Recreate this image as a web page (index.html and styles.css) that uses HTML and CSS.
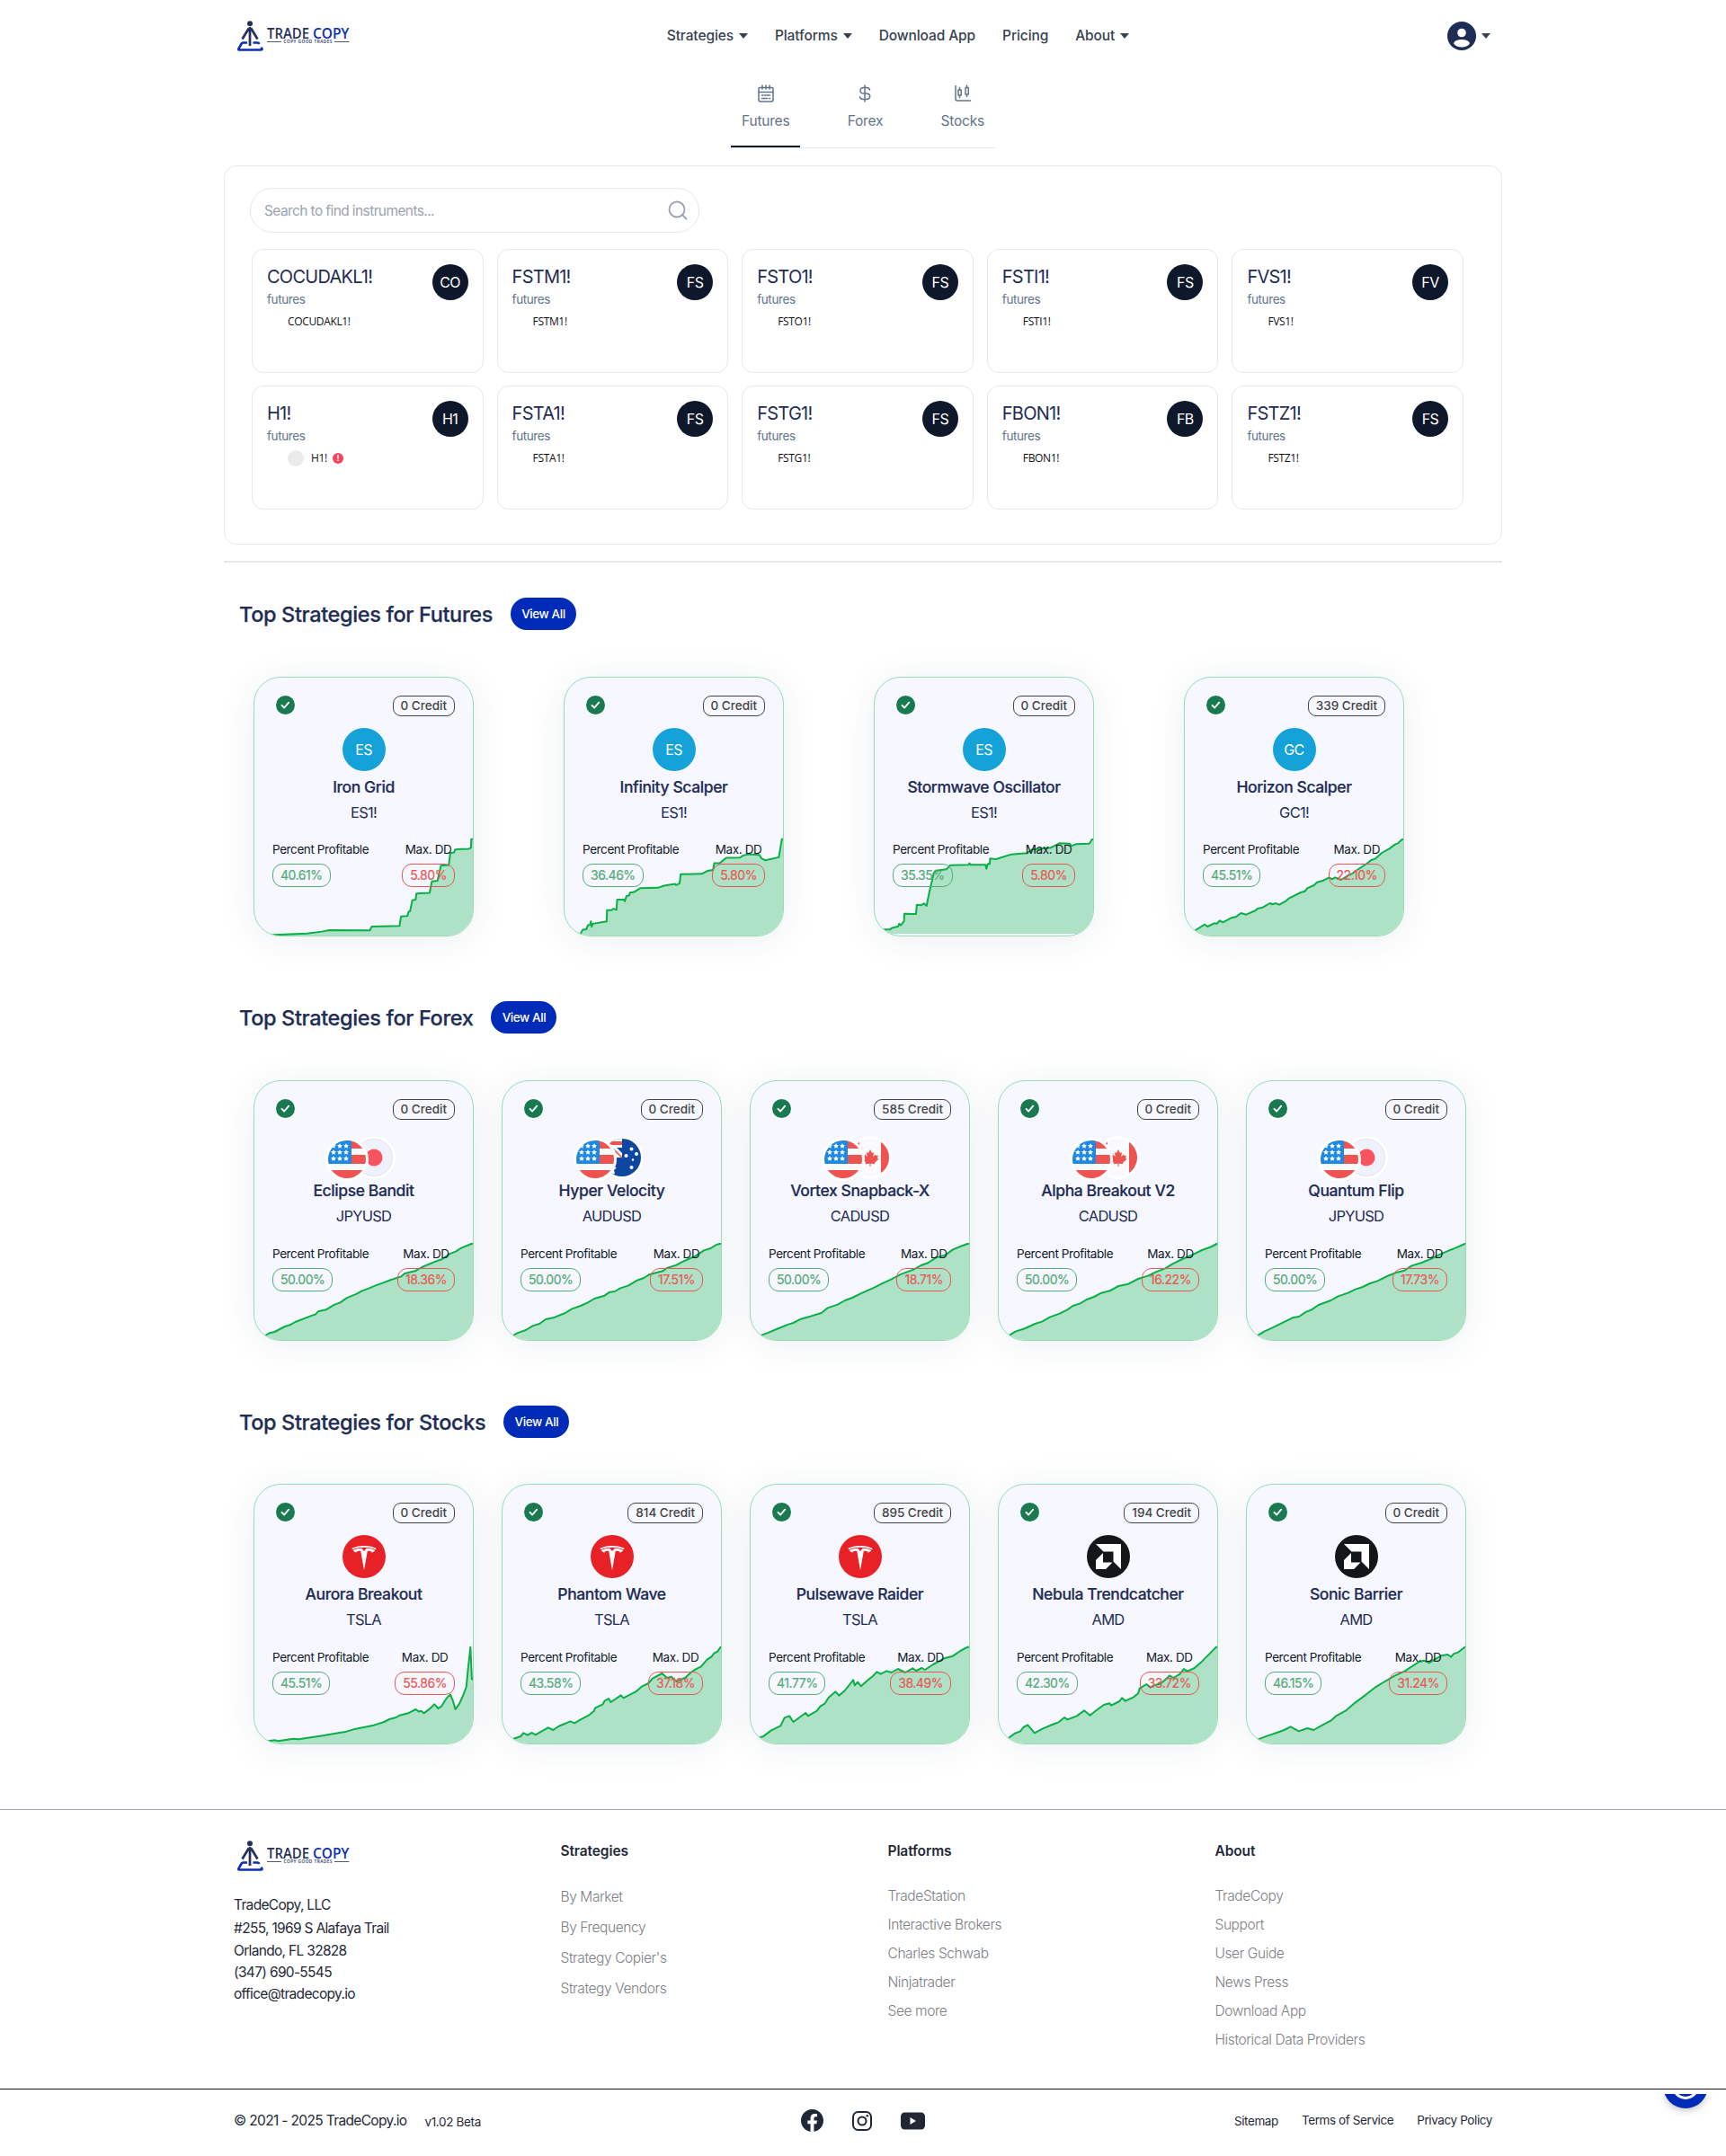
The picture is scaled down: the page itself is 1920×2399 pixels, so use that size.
FILE: index.html
```html
<!DOCTYPE html>
<html lang="en">
<head>
<meta charset="utf-8">
<title>TradeCopy</title>
<link rel="stylesheet" href="styles.css">
</head>
<body>
<svg class="defs" width="0" height="0">
  <symbol id="check" viewBox="0 0 21 21"><circle cx="10.500" cy="10.500" r="10.500" fill="#1a7a4f"/><path d="m6.500 10.800 2.700 2.700 5-5.800" fill="none" stroke="#fff" stroke-width="1.900" stroke-linecap="round" stroke-linejoin="round"/></symbol>
  <symbol id="tsla" viewBox="0 0 48 48"><circle cx="24" cy="24" r="24" fill="#e82127"/><path transform="translate(10.500 12) scale(1.125 1.140)" fill="#fff" d="M12 5.362l2.475-3.026s4.245.09 8.471 2.054c-1.082 1.636-3.231 2.438-3.231 2.438-.146-1.439-1.154-1.79-4.354-1.79L12 24 8.619 5.034c-3.18 0-4.188.354-4.335 1.792 0 0-2.146-.795-3.229-2.43C5.28 2.431 9.525 2.34 9.525 2.34L12 5.362zm0-3.899c3.415-.03 7.326.528 11.328 2.28.535-.968.672-1.395.672-1.395C19.625.612 15.528.015 12 0 8.472.015 4.375.61 0 2.349c0 0 .195.525.672 1.396C4.674 1.989 8.585 1.435 12 1.46z"/></symbol>
  <symbol id="amd" viewBox="0 0 48 48"><circle cx="24" cy="24" r="24" fill="#14171a"/><path fill="#fff" d="M10 10h28v28l-8.500-8.500V18.500h-11zM18 20v10.500h10.500L21 38H10V28z"/></symbol>
  <clipPath id="disc"><circle cx="24" cy="24" r="21"/></clipPath>
  <symbol id="star" viewBox="0 0 10 10"><path fill="#fff" d="m5 0 1.500 3.300 3.500.4-2.600 2.400.7 3.600L5 8 1.900 9.700l.7-3.600L0 3.700l3.500-.4z"/></symbol>
  <symbol id="usd" viewBox="0 0 48 48">
    <circle cx="24" cy="24" r="24" fill="#fff"/>
    <g clip-path="url(#disc)">
      <path fill="#f9fafc" d="M0 0h48v48H0z"/><path fill="#ef5350" d="M24 3h24v9H24zM24 19h24v10H24zM0 36h48v12H0z"/><path fill="#1e88e5" d="M0 0h29v29H0z"/>
      <use href="#star" x="6" y="6" width="6" height="6"/><use href="#star" x="13" y="6" width="6" height="6"/><use href="#star" x="20" y="6" width="6" height="6"/>
      <use href="#star" x="6" y="13" width="6" height="6"/><use href="#star" x="13" y="13" width="6" height="6"/><use href="#star" x="20" y="13" width="6" height="6"/>
      <use href="#star" x="6" y="20" width="6" height="6"/><use href="#star" x="13" y="20" width="6" height="6"/><use href="#star" x="20" y="20" width="6" height="6"/>
    </g>
  </symbol>
  <symbol id="jpy" viewBox="0 0 48 48"><circle cx="24" cy="24" r="24" fill="#fff"/><circle cx="24" cy="24" r="20.500" fill="#eff2fa" stroke="#e1e3ec"/><circle cx="24" cy="24" r="9.500" fill="#f9535f"/></symbol>
  <symbol id="cad" viewBox="0 0 48 48"><circle cx="24" cy="24" r="24" fill="#fff"/><g clip-path="url(#disc)"><path fill="#fafafc" d="M0 0h48v48H0z"/><path fill="#ef5350" d="M0 0h12v48H0zM36 0h12v48H36zM24 15l2 4 2-1-.7 5 2.700-2.500.8 1.500 2.200-.3-1 3 1.500 1-4.500 4 .3 1.500-4.800-.5v3.300h-1v-3.300l-4.800.5.3-1.500-4.500-4 1.500-1-1-3 2.200.3.800-1.500 2.700 2.500-.7-5 2 1z"/></g></symbol>
  <symbol id="aud" viewBox="0 0 48 48"><circle cx="24" cy="24" r="24" fill="#fff"/><g clip-path="url(#disc)"><path fill="#0d47a1" d="M0 0h48v48H0z"/><path fill="#fff" d="M0 0h24v24H0z"/><path fill="#ef5350" d="M0 6h24v4H0zM11 13l3 0 10 10v2z"/><path fill="#0d47a1" d="M18 13h6v6z"/><path fill="#fff" d="m12 31 2 4 4 0-3 3 1 4-8 0z"/><g fill="#fff"><circle cx="34.500" cy="14.500" r="2"/><circle cx="28.500" cy="22" r="2"/><circle cx="40" cy="20" r="2"/><circle cx="34.500" cy="35" r="2"/><circle cx="36" cy="26.500" r="1.200"/></g></g></symbol>
</svg>

<header class="header">
  <svg class="logo" viewBox="0 0 125 34">
    <circle cx="14" cy="3.200" r="3"/>
    <path class="logo-legs" d="M14 7v21M12.800 8.500 5.500 20.500M15.200 8.500 22.500 20.500"/>
    <path class="logo-base" d="M11 24.500H6.500Q5.300 24.500 4.700 25.500L1.500 31Q.8 32.500 2.600 32.500H26Q28 32.500 27.300 31L26.500 29.600M17.500 24.500H22.500Q23.800 24.500 24.400 26"/>
    <text x="33" y="20" textLength="47" lengthAdjust="spacingAndGlyphs">TRADE</text>
    <text class="logo-blue" x="84" y="20" textLength="40.500" lengthAdjust="spacingAndGlyphs">COPY</text>
    <path class="logo-rule" d="M33 23.500h16M108 23.500h16.500"/>
    <text class="logo-tag" x="51.500" y="25.300" textLength="54">COPY GOOD TRADES</text>
  </svg>
  <nav class="nav">
    <a class="drop">Strategies</a><a class="drop">Platforms</a><a>Download App</a><a>Pricing</a><a class="drop">About</a>
  </nav>
  <div class="user drop">
    <svg width="32" height="32" viewBox="0 0 32 32"><circle cx="16" cy="16" r="16" fill="#1f2d55"/><circle cx="16" cy="12.500" r="4.800" fill="#fff"/><path fill="#fff" d="M7 24.500c1-3.500 5-4.500 9-4.500s8 1 9 4.500c-2 2.500-5 4-9 4s-7-1.500-9-4z"/></svg>
  </div>
</header>

<div class="tabs">
  <div class="tab tab-active">
    <svg viewBox="0 0 20 20"><path d="M3.500 3.500h13q1.500 0 1.500 1.500v12q0 2-2 2H4q-2 0-2-2V5q0-1.500 1.500-1.500zM2 8.500h16M6 1v4M10 1v4M14 1v4M5.500 12h1.500M8.500 12h6M5.500 15.500h6M13.500 15.500h1"/></svg>
    <span>Futures</span>
  </div>
  <div class="tab">
    <svg viewBox="0 0 20 20"><path d="M10 1v18M15.500 6Q15 3.500 11.500 3.500H9Q5 3.500 5 6.700 5 10 9 10h2.500Q15.700 10 15.700 13.300 15.700 16.500 11.500 16.500H8.500Q5 16.500 4.500 13.800"/></svg>
    <span>Forex</span>
  </div>
  <div class="tab">
    <svg viewBox="0 0 20 20"><path d="M2 1.500V16q0 2 2 2H18.500M6.500 3.500v2.500M6.500 12v2.500M5 6h3.200v6H5zM14.500 1v2.500M14.500 11v2.500M13 3.500h3.200v7.500H13z"/></svg>
    <span>Stocks</span>
  </div>
</div>

<main class="main">
  <section class="panel">
    <div class="search"><span>Search to find instruments...</span>
      <svg width="22" height="22" viewBox="0 0 22 22"><path d="M10 1.500a8.500 8.500 0 1 0 0 17 8.500 8.500 0 0 0 0-17zM16.500 16.500l4 4" fill="none" stroke="#9ca3af" stroke-width="1.800" stroke-linecap="round"/></svg>
    </div>
    <div class="grid">
      <div class="inst"><div><h3>COCUDAKL1!</h3><p>futures</p><small>COCUDAKL1!</small></div><b>CO</b></div>
      <div class="inst"><div><h3>FSTM1!</h3><p>futures</p><small>FSTM1!</small></div><b>FS</b></div>
      <div class="inst"><div><h3>FSTO1!</h3><p>futures</p><small>FSTO1!</small></div><b>FS</b></div>
      <div class="inst"><div><h3>FSTI1!</h3><p>futures</p><small>FSTI1!</small></div><b>FS</b></div>
      <div class="inst"><div><h3>FVS1!</h3><p>futures</p><small>FVS1!</small></div><b>FV</b></div>
      <div class="inst"><div><h3>H1!</h3><p>futures</p><small><i class="dot"></i>H1!<i class="alert">!</i></small></div><b>H1</b></div>
      <div class="inst"><div><h3>FSTA1!</h3><p>futures</p><small>FSTA1!</small></div><b>FS</b></div>
      <div class="inst"><div><h3>FSTG1!</h3><p>futures</p><small>FSTG1!</small></div><b>FS</b></div>
      <div class="inst"><div><h3>FBON1!</h3><p>futures</p><small>FBON1!</small></div><b>FB</b></div>
      <div class="inst"><div><h3>FSTZ1!</h3><p>futures</p><small>FSTZ1!</small></div><b>FS</b></div>
    </div>
  </section>
  <hr class="rule">

  <section class="group">
    <div class="group-head"><h2>Top Strategies for Futures</h2><a class="btn">View All</a></div>
    <div class="cards cards-wide">
      <article class="card">
        <svg class="chart" viewBox="101 872 581 330" preserveAspectRatio="none"><path d="M60 1260V1200H140L150 1197 240 1192 280 1186 300 1181 408 1182 413 1169 487 1167 491 1136 508 1134 511 1120 515 1119 521 1082 530 1080 532 1060 567 1058 573 1020 588 1018 597 968 618 966 622 926 632 924 635 914 672 912 677 908 678 880H740V1260z"/></svg>
        <div class="top"><svg><use href="#check"/></svg><span class="credit">0 Credit</span></div>
        <div class="badge badge-text">ES</div><h4>Iron Grid</h4><p class="sym">ES1!</p>
        <div class="stats"><div><span>Percent Profitable</span><em class="up">40.61%</em></div><div><span>Max. DD</span><em class="down">5.80%</em></div></div>
      </article>
      <article class="card">
        <svg class="chart" viewBox="920 872 581 330" preserveAspectRatio="none"><path d="M900 1260V1240L962 1195 968 1180 978 1178 982 1165 988 1163 990 1152 992 1170 995 1160 1032 1152 1033 1115 1045 1115 1050 1110 1058 1114 1060 1080 1078 1080 1080 1086 1085 1068 1092 1066 1094 1057 1105 1055 1122 1042 1168 1041 1185 1034 1214 1028 1217 1032 1226 1026 1229 996 1285 995 1300 985 1315 982 1318 960 1332 960 1350 942 1387 941 1395 934 1410 930 1438 932 1444 944 1454 950 1490 940 1498 880H1560V1260z"/></svg>
        <div class="top"><svg><use href="#check"/></svg><span class="credit">0 Credit</span></div>
        <div class="badge badge-text">ES</div><h4>Infinity Scalper</h4><p class="sym">ES1!</p>
        <div class="stats"><div><span>Percent Profitable</span><em class="up">36.46%</em></div><div><span>Max. DD</span><em class="down">5.80%</em></div></div>
      </article>
      <article class="card">
        <svg class="chart chart-raised" viewBox="77 600 581 327" preserveAspectRatio="none"><path d="M50 980V913H118L122 908 140 902 142 894 147 898 155 885 156 860 187 861 189 830 200 832 208 826 215 834 222 790 234 725 240 716 268 712 278 698 326 697 329 692 332 697 372 697 374 710 378 694 383 694 384 676 400 678 440 662 482 658 495 646 545 640 568 625 596 626 600 634 612 628 648 626 655 612H720V980z"/></svg>
        <div class="top"><svg><use href="#check"/></svg><span class="credit">0 Credit</span></div>
        <div class="badge badge-text">ES</div><h4>Stormwave Oscillator</h4><p class="sym">ES1!</p>
        <div class="stats"><div><span>Percent Profitable</span><em class="up">35.35%</em></div><div><span>Max. DD</span><em class="down">5.80%</em></div></div>
      </article>
      <article class="card">
        <svg class="chart" viewBox="897 602 580 333" preserveAspectRatio="none"><path d="M880 980V950L925 914 950 895 957 902 975 891 982 892 990 882 998 888 1020 873 1032 870 1046 857 1060 862 1085 848 1090 842 1104 838 1123 824 1130 828 1137 824 1148 829 1165 817 1173 808 1205 788 1216 784 1222 774 1240 764 1248 754 1265 748 1280 738 1288 744 1296 738 1312 746 1330 732 1340 726 1345 722 1358 710 1380 692 1392 680 1402 676 1420 656 1440 642 1455 628 1463 624 1474 611H1540V980z"/></svg>
        <div class="top"><svg><use href="#check"/></svg><span class="credit">339 Credit</span></div>
        <div class="badge badge-text">GC</div><h4>Horizon Scalper</h4><p class="sym">GC1!</p>
        <div class="stats"><div><span>Percent Profitable</span><em class="up">45.51%</em></div><div><span>Max. DD</span><em class="down">22.10%</em></div></div>
      </article>
    </div>
  </section>

  <section class="group">
    <div class="group-head"><h2>Top Strategies for Forex</h2><a class="btn">View All</a></div>
    <div class="cards">
      <article class="card">
        <svg class="chart" viewBox="111 872 638 333" preserveAspectRatio="none"><path d="M80 1250V1210L143 1187 155 1179 170 1175 200 1157 215 1152 230 1142 275 1122 290 1116 297 1107 320 1101 345 1084 362 1077 380 1062 410 1048 425 1038 445 1030 465 1020 485 1012 510 1001 540 990 550 980 580 972 600 959 640 940 660 932 680 915 700 906 715 895 745 881H800V1250z"/></svg>
        <div class="top"><svg><use href="#check"/></svg><span class="credit">0 Credit</span></div>
        <div class="badge pair"><svg><use href="#usd"/></svg><svg><use href="#jpy"/></svg></div><h4>Eclipse Bandit</h4><p class="sym">JPYUSD</p>
        <div class="stats"><div><span>Percent Profitable</span><em class="up">50.00%</em></div><div><span>Max. DD</span><em class="down">18.36%</em></div></div>
      </article>
      <article class="card">
        <svg class="chart" viewBox="832 872 638 333" preserveAspectRatio="none"><path d="M800 1250V1210L863 1187 875 1179 900 1169 920 1155 940 1148 958 1133 980 1128 1015 1112 1035 1098 1060 1088 1080 1078 1100 1064 1130 1054 1145 1042 1160 1040 1175 1030 1200 1020 1225 1003 1245 995 1260 984 1300 972 1312 962 1340 952 1355 942 1375 932 1395 922 1420 903 1440 896 1455 885 1466 881H1520V1250z"/></svg>
        <div class="top"><svg><use href="#check"/></svg><span class="credit">0 Credit</span></div>
        <div class="badge pair"><svg><use href="#usd"/></svg><svg><use href="#aud"/></svg></div><h4>Hyper Velocity</h4><p class="sym">AUDUSD</p>
        <div class="stats"><div><span>Percent Profitable</span><em class="up">50.00%</em></div><div><span>Max. DD</span><em class="down">17.51%</em></div></div>
      </article>
      <article class="card">
        <svg class="chart" viewBox="63 602 445 333" preserveAspectRatio="none"><path d="M40 980V940L85 916 100 907 120 893 140 880 150 875 165 862 185 853 207 842 220 825 240 814 255 800 270 791 290 775 315 757 330 744 350 729 370 712 395 697 410 683 425 674 440 658 460 648 475 630 490 620 505 611H560V980z"/></svg>
        <div class="top"><svg><use href="#check"/></svg><span class="credit">585 Credit</span></div>
        <div class="badge pair"><svg><use href="#usd"/></svg><svg><use href="#cad"/></svg></div><h4>Vortex Snapback-X</h4><p class="sym">CADUSD</p>
        <div class="stats"><div><span>Percent Profitable</span><em class="up">50.00%</em></div><div><span>Max. DD</span><em class="down">18.71%</em></div></div>
      </article>
      <article class="card">
        <svg class="chart" viewBox="566 602 445 333" preserveAspectRatio="none"><path d="M540 980V940L588 916 600 904 620 893 640 878 655 870 670 856 690 844 705 832 717 818 732 810 745 797 760 788 775 775 792 768 810 752 830 745 850 728 870 718 885 706 905 693 920 678 940 662 960 648 980 632 1000 620 1010 611H1060V980z"/></svg>
        <div class="top"><svg><use href="#check"/></svg><span class="credit">0 Credit</span></div>
        <div class="badge pair"><svg><use href="#usd"/></svg><svg><use href="#cad"/></svg></div><h4>Alpha Breakout V2</h4><p class="sym">CADUSD</p>
        <div class="stats"><div><span>Percent Profitable</span><em class="up">50.00%</em></div><div><span>Max. DD</span><em class="down">16.22%</em></div></div>
      </article>
      <article class="card">
        <svg class="chart" viewBox="1069 602 445 333" preserveAspectRatio="none"><path d="M1040 980V940L1092 916 1105 903 1120 892 1135 880 1150 868 1162 858 1175 854 1190 838 1200 832 1215 815 1240 800 1255 786 1275 775 1290 763 1305 755 1320 743 1335 735 1355 719 1375 706 1390 700 1405 684 1425 674 1445 661 1460 648 1480 634 1495 624 1513 611H1560V980z"/></svg>
        <div class="top"><svg><use href="#check"/></svg><span class="credit">0 Credit</span></div>
        <div class="badge pair"><svg><use href="#usd"/></svg><svg><use href="#jpy"/></svg></div><h4>Quantum Flip</h4><p class="sym">JPYUSD</p>
        <div class="stats"><div><span>Percent Profitable</span><em class="up">50.00%</em></div><div><span>Max. DD</span><em class="down">17.73%</em></div></div>
      </article>
    </div>
  </section>

  <section class="group">
    <div class="group-head"><h2>Top Strategies for Stocks</h2><a class="btn">View All</a></div>
    <div class="cards">
      <article class="card">
        <svg class="chart" viewBox="111 869 638 333" preserveAspectRatio="none"><path d="M80 1250V1192L150 1191 172 1188 180 1191 225 1183 240 1185 310 1173 380 1159 400 1152 460 1138 490 1127 505 1118 525 1112 535 1105 560 1098 582 1085 592 1093 598 1090 606 1098 622 1084 637 1068 648 1082 658 1074 672 1048 683 1035 691 1057 698 1085 710 1065 720 1040 730 1010 735 950 742 877 746 984 760 990V1250z"/></svg>
        <div class="top"><svg><use href="#check"/></svg><span class="credit">0 Credit</span></div>
        <svg class="badge"><use href="#tsla"/></svg><h4>Aurora Breakout</h4><p class="sym">TSLA</p>
        <div class="stats"><div><span>Percent Profitable</span><em class="up">45.51%</em></div><div><span>Max. DD</span><em class="down">55.86%</em></div></div>
      </article>
      <article class="card">
        <svg class="chart" viewBox="832 869 638 333" preserveAspectRatio="none"><path d="M800 1250V1205L863 1184 885 1175 893 1164 905 1171 918 1163 928 1170 950 1156 965 1146 980 1154 995 1142 1030 1125 1042 1131 1060 1119 1085 1104 1098 1092 1103 1080 1125 1068 1130 1057 1142 1049 1148 1061 1178 1038 1185 1047 1220 1027 1240 1008 1258 998 1270 982 1298 965 1312 980 1325 976 1340 992 1365 980 1382 962 1395 952 1412 942 1430 918 1442 910 1450 898 1460 892 1468 878H1520V1250z"/></svg>
        <div class="top"><svg><use href="#check"/></svg><span class="credit">814 Credit</span></div>
        <svg class="badge"><use href="#tsla"/></svg><h4>Phantom Wave</h4><p class="sym">TSLA</p>
        <div class="stats"><div><span>Percent Profitable</span><em class="up">43.58%</em></div><div><span>Max. DD</span><em class="down">37.18%</em></div></div>
      </article>
      <article class="card">
        <svg class="chart" viewBox="63 599 445 333" preserveAspectRatio="none"><path d="M40 980V940L81 909 88 906 105 885 124 870 132 843 142 837 150 857 175 827 180 837 198 820 205 805 214 796 222 775 236 756 243 769 255 752 272 717 275 735 281 724 288 738 300 720 312 704 320 690 328 697 340 687 350 692 363 680 378 692 393 678 400 686 412 677 418 683 435 665 450 652 457 645 475 637 490 620 505 607H560V980z"/></svg>
        <div class="top"><svg><use href="#check"/></svg><span class="credit">895 Credit</span></div>
        <svg class="badge"><use href="#tsla"/></svg><h4>Pulsewave Raider</h4><p class="sym">TSLA</p>
        <div class="stats"><div><span>Percent Profitable</span><em class="up">41.77%</em></div><div><span>Max. DD</span><em class="down">38.49%</em></div></div>
      </article>
      <article class="card">
        <svg class="chart" viewBox="566 599 445 333" preserveAspectRatio="none"><path d="M540 980V940L586 911 598 896 610 888 616 875 625 867 639 894 655 880 675 866 688 858 700 842 706 849 725 837 740 819 752 835 765 818 780 800 792 795 795 802 812 788 817 777 824 787 840 775 850 762 853 745 867 731 875 742 885 733 895 730 908 712 914 702 922 710 935 697 943 680 950 688 965 677 980 655 995 630 1009 607H1060V980z"/></svg>
        <div class="top"><svg><use href="#check"/></svg><span class="credit">194 Credit</span></div>
        <svg class="badge"><use href="#amd"/></svg><h4>Nebula Trendcatcher</h4><p class="sym">AMD</p>
        <div class="stats"><div><span>Percent Profitable</span><em class="up">42.30%</em></div><div><span>Max. DD</span><em class="down">33.72%</em></div></div>
      </article>
      <article class="card">
        <svg class="chart" viewBox="1069 599 445 333" preserveAspectRatio="none"><path d="M1040 980V940L1092 915 1110 904 1130 893 1145 884 1158 873 1175 888 1192 878 1205 884 1220 870 1240 853 1250 838 1270 820 1290 792 1310 768 1330 742 1350 722 1370 703 1390 688 1420 656 1430 652 1440 660 1452 648 1465 636 1478 632 1485 640 1490 630 1500 624 1513 607H1560V980z"/></svg>
        <div class="top"><svg><use href="#check"/></svg><span class="credit">0 Credit</span></div>
        <svg class="badge"><use href="#amd"/></svg><h4>Sonic Barrier</h4><p class="sym">AMD</p>
        <div class="stats"><div><span>Percent Profitable</span><em class="up">46.15%</em></div><div><span>Max. DD</span><em class="down">31.24%</em></div></div>
      </article>
    </div>
  </section>
</main>

<footer class="footer">
  <div class="foot-grid">
    <div class="address">
      <svg class="logo" viewBox="0 0 125 34">
        <circle cx="14" cy="3.200" r="3"/>
        <path class="logo-legs" d="M14 7v21M12.800 8.500 5.500 20.500M15.200 8.500 22.500 20.500"/>
        <path class="logo-base" d="M11 24.500H6.500Q5.300 24.500 4.700 25.500L1.500 31Q.8 32.500 2.600 32.500H26Q28 32.500 27.300 31L26.500 29.600M17.500 24.500H22.500Q23.800 24.500 24.400 26"/>
        <text x="33" y="20" textLength="47" lengthAdjust="spacingAndGlyphs">TRADE</text>
        <text class="logo-blue" x="84" y="20" textLength="40.500" lengthAdjust="spacingAndGlyphs">COPY</text>
        <path class="logo-rule" d="M33 23.500h16M108 23.500h16.500"/>
        <text class="logo-tag" x="51.500" y="25.300" textLength="54">COPY GOOD TRADES</text>
      </svg>
      <p class="company">TradeCopy, LLC</p><p class="company">#255, 1969 S Alafaya Trail</p><p>Orlando, FL 32828</p><p>(347) 690-5545</p><p>office@tradecopy.io</p></div>
    <div class="col col-loose"><h5>Strategies</h5><a>By Market</a><a>By Frequency</a><a>Strategy Copier's</a><a>Strategy Vendors</a></div>
    <div class="col"><h5>Platforms</h5><a>TradeStation</a><a>Interactive Brokers</a><a>Charles Schwab</a><a>Ninjatrader</a><a>See more</a></div>
    <div class="col"><h5>About</h5><a>TradeCopy</a><a>Support</a><a>User Guide</a><a>News Press</a><a>Download App</a><a>Historical Data Providers</a></div>
  </div>
  <div class="bottom">
    <div class="bottom-in">
      <div class="copy"><span>© 2021 - 2025 TradeCopy.io</span><small>v1.02 Beta</small></div>
      <div class="social">
        <svg width="25" height="25" viewBox="0 0 24 24"><path d="M24 12.073c0-6.627-5.373-12-12-12s-12 5.373-12 12c0 5.990 4.388 10.954 10.125 11.854v-8.385H7.078v-3.470h3.047V9.430c0-3.007 1.792-4.669 4.533-4.669 1.312 0 2.686.235 2.686.235v2.953H15.830c-1.491 0-1.956.925-1.956 1.874v2.250h3.328l-.532 3.470h-2.796v8.385C19.612 23.027 24 18.062 24 12.073z"/></svg>
        <svg width="22" height="22" viewBox="0 0 22 22"><g fill="none" stroke="#202838" stroke-width="2"><rect x="1" y="1" width="20" height="20" rx="5.500"/><circle cx="11" cy="11" r="4.500"/></g><circle cx="16.800" cy="5.200" r="1.300"/></svg>
        <svg width="27" height="20" viewBox="0 0 27 20"><rect width="27" height="19" y=".5" rx="4.500"/><path d="M10.500 6v8l6.500-4z" fill="#fff"/></svg>
      </div>
      <div class="legal"><a class="low">Sitemap</a><a>Terms of Service</a><a>Privacy Policy</a></div>
    </div>
  </div>
</footer>
<div class="chat"><svg width="70" height="40" viewBox="0 0 70 40"><circle cx="35" cy="-9" r="25" fill="#002bb8"/><circle cx="35" cy="-9" r="13.500" fill="none" stroke="#fff" stroke-width="3"/></svg></div>
</body>
</html>
```
FILE: styles.css
```css
* { box-sizing: border-box; margin: 0; padding: 0; }
body { position: relative; width: 1920px; height: 2399px; overflow: hidden; background: #fff; font-family: Inter, "Liberation Sans", sans-serif; color: #1f2937; }
.defs { position: absolute; }

.logo { display: block; width: 125px; height: 34px; fill: #26305a; font: 600 16px "Open Sans", sans-serif; }
.logo-legs { fill: none; stroke: #26305a; stroke-width: 2.7; }
.logo-base { fill: none; stroke: #0a2fb8; stroke-width: 2.6; }
.logo-blue { fill: #0a2fb8; }
.logo-rule { stroke: #26305a; stroke-width: .8; }
.logo-tag { font-size: 4.8px; }

.header { width: 1395px; height: 80px; margin: 0 auto; padding-left: 1px; display: flex; align-items: center; justify-content: space-between; }
.nav { display: flex; gap: 30px; padding-bottom: 1px; font-size: 15.5px; font-weight: 500; letter-spacing: -.1px; color: #374151; }
.drop { display: flex; align-items: center; }
.drop::after { content: ""; margin-left: 6px; border: 5px solid transparent; border-top: 6px solid #374151; border-bottom: 0; }

.tabs { width: 294px; margin: 0 auto; height: 85px; display: flex; justify-content: space-between; border-bottom: 1px solid #e2e8f0; }
.tab { height: 84px; padding: 14px 12px 0; display: flex; flex-direction: column; align-items: center; gap: 9px; font-size: 15.5px; line-height: 24px; letter-spacing: -.2px; color: #64748b; }
.tab-active { border-bottom: 2px solid #0f172a; }
.tab svg { width: 20px; height: 20px; fill: none; stroke: #64748b; stroke-width: 1.5; stroke-linecap: round; stroke-linejoin: round; }

.main { width: 1422px; margin: 19px auto 0; }
.panel { height: 422px; border: 1px solid #e5e7eb; border-radius: 14px; padding: 24px 28px 0; }
.search { width: 500px; height: 50px; border: 1px solid #e5e7eb; border-radius: 25px; padding: 0 12px 0 15px; display: flex; align-items: center; justify-content: space-between; font-size: 15.5px; letter-spacing: -.6px; color: #9ca3af; }
.grid { width: 1348px; margin: 18px 0 0 2px; display: grid; grid-template-columns: repeat(5, 1fr); gap: 14px 15px; }
.inst { height: 138px; border: 1px solid #e2e8f0; border-radius: 13px; padding: 16px; display: flex; justify-content: space-between; }
.inst h3 { font-size: 20px; line-height: 29px; font-weight: 400; letter-spacing: -.75px; color: #1f2d55; }
.inst p { font-size: 13.5px; line-height: 20px; letter-spacing: -.4px; color: #64748b; }
.inst small { display: flex; align-items: center; height: 29px; padding-left: 23px; font: 12px "Open Sans", sans-serif; height: 29px; letter-spacing: -.35px; color: #0f0f0f; }
.inst b { width: 40px; height: 40px; border-radius: 50%; background: #0f172a; color: #fff; font-size: 16px; font-weight: 400; line-height: 40px; text-align: center; letter-spacing: -.5px; }
.dot { width: 18px; height: 18px; border-radius: 50%; background: #ebebeb; margin-right: 8px; }
.alert { width: 12px; height: 12px; border-radius: 50%; background: #f7435c; color: #fff; margin-left: 6px; font: 700 9px/12px Inter, sans-serif; text-align: center; }
.rule { height: 2px; margin-top: 18px; border: 0; background: #e5e7eb; }

.group { padding: 0 0 72px 17px; }
.rule + .group { padding-top: 39px; }
.group-head { display: flex; align-items: center; gap: 20px; height: 36px; }
h2 { padding-top: 1px; font-size: 23.5px; font-weight: 500; letter-spacing: -.35px; -webkit-text-stroke: .25px; color: #1f2d55; }
.btn { width: 73px; height: 36px; border-radius: 18px; background: #002bb8; color: #fff; font-size: 13.5px; font-weight: 500; line-height: 36px; text-align: center; letter-spacing: -.4px; }
.cards { display: flex; gap: 31px; margin: 52px 0 0 16px; }
.group:last-child .cards { margin-top: 51px; }
.cards-wide { gap: 100px; }
.card { position: relative; flex: none; width: 245px; height: 290px; border: 1px solid #98dcb4; border-radius: 30px; background: #f6f7ff; padding: 20px; box-shadow: 0 4px 40px rgba(30, 46, 85, .08); overflow: hidden; text-align: center; z-index: 0; }
.cards-wide .card { height: 289px; }
.chart { position: absolute; z-index: -1; left: 0; bottom: -1px; width: 243px; height: 111px; fill: #ade2c6; stroke: #0aaf45; stroke-width: 2; stroke-linejoin: round; overflow: hidden; }
.chart path { vector-effect: non-scaling-stroke; }
.chart-raised { bottom: 2px; height: 109px; }
.top { height: 23px; display: flex; justify-content: space-between; }
.top svg { width: 21px; height: 21px; margin-left: 4px; }
.credit { height: 23px; border: 1px solid #444; border-radius: 9px; padding: 0 8px; font-size: 13.5px; font-weight: 500; line-height: 21px; letter-spacing: 0; color: #444; }
.badge { display: block; width: 48px; height: 48px; margin: 13px auto 0; }
.badge-text { border-radius: 50%; background: #14a2d9; color: #fff; font-size: 16px; line-height: 48px; letter-spacing: -.6px; }
.pair { width: 78px; display: flex; margin-left: 59px; padding-top: 5px; }
.pair svg { flex: none; width: 48px; height: 48px; }
.pair svg:first-child { position: relative; z-index: 1; margin: 2px -18px 0 0; }
h4 { margin: 4px -15px 0; font-size: 17.5px; line-height: 28px; font-weight: 500; letter-spacing: -.4px; -webkit-text-stroke: .2px; color: #1f2d55; }
.sym { margin-top: 2px; font-size: 16.5px; line-height: 24px; letter-spacing: -.75px; color: #1f2d55; }
.stats { margin-top: 20px; display: flex; justify-content: space-between; font-size: 13.5px; line-height: 20px; letter-spacing: -.4px; color: #111827; }
.stats div { display: flex; flex-direction: column; align-items: center; }
.stats div:first-child { align-items: flex-start; }
.stats em { margin-top: 6px; height: 26px; border: 1px solid; border-radius: 11px; padding: 0 8px; font-size: 14px; line-height: 24px; font-style: normal; letter-spacing: -.45px; -webkit-text-stroke: .2px; }
.cards-wide .stats { margin-top: 19px; }
.up { color: #55ab76; }
.down { color: #eb5757; }

.footer { border-top: 1px solid #9ca3af; }
.foot-grid { width: 1400px; height: 310px; margin: 0 auto; padding-top: 34px; display: grid; grid-template-columns: 363.5px 364px 364px 1fr; font-size: 15.5px; letter-spacing: -.68px; }
.address .logo { margin: 0 0 25px 4px; letter-spacing: 0; }
.address p { line-height: 24px; }
.address .company { line-height: 26px; }
.col { display: flex; flex-direction: column; font-weight: 300; color: #7d8085; line-height: 32px; letter-spacing: -.4px; }
.col h5 { margin-bottom: 22px; font-size: 15.5px; line-height: 24px; font-weight: 600; letter-spacing: -.1px; color: #1f2937; }
.col-loose { line-height: 34px; }
.bottom { border-top: 1px solid #0b1030; }
.bottom-in { width: 1400px; height: 69px; margin: 0 auto; display: grid; grid-template-columns: 1fr auto 1fr; align-items: center; }
.copy { display: flex; align-items: center; gap: 20px; font-size: 15.5px; letter-spacing: -.65px; }
.copy small { padding-top: 2px; font-size: 13.5px; letter-spacing: -.35px; }
.social { display: flex; align-items: center; gap: 32px; fill: #202838; }
.legal { display: flex; justify-content: flex-end; gap: 26px; font-size: 13.5px; letter-spacing: -.4px; }
.low { padding-top: 1px; }
.chat { position: absolute; left: 1840px; top: 2330px; width: 70px; height: 40px; overflow: hidden; }
.chat svg { display: block; filter: drop-shadow(0 2px 4px rgba(0, 0, 0, .25)); }
```
